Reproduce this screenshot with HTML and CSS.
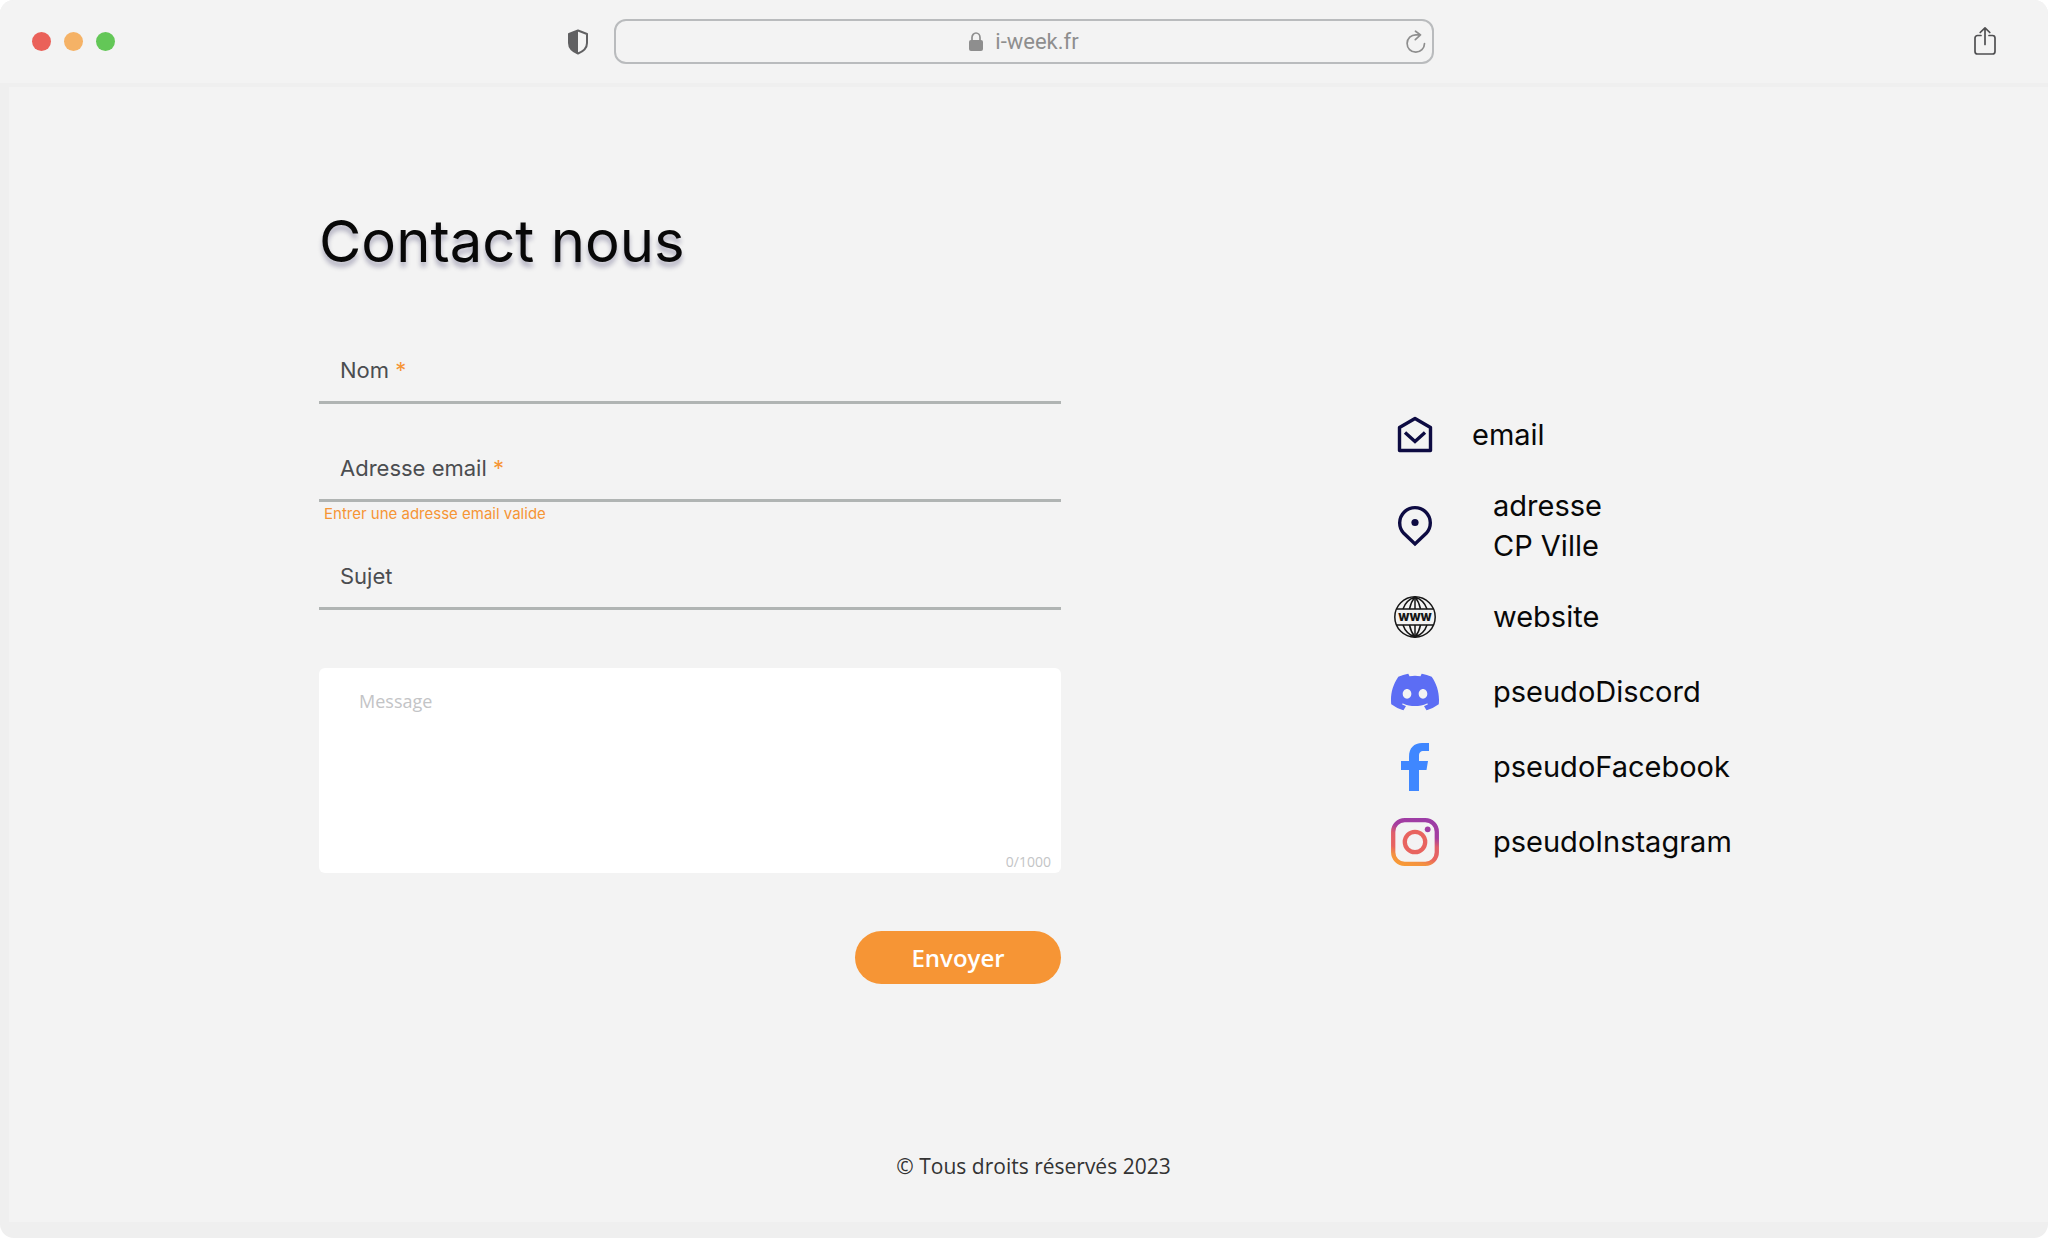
FILE: index.html
```
<!DOCTYPE html>
<html lang="fr">
<head>
    <meta charset="UTF-8">
    <meta name="viewport" content="width=device-width, initial-scale=1.0">
    <title>Contact nous</title>
    <link rel="stylesheet" href="styles.css">
</head>
<body>
    <div class="window">
        <header class="toolbar">
            <div class="toolbar-left">
                <div class="dots">
                    <span class="dot red"></span>
                    <span class="dot orange"></span>
                    <span class="dot green"></span>
                </div>
                <svg width="22" height="26" viewBox="0 0 22 26">
                    <path d="M11 1.500 20 5v9c0 5-4 8.500-9 10.500C6 22.500 2 19 2 14V5z" fill="none" stroke="#606062" stroke-width="2" stroke-linejoin="round"/>
                    <path d="M11 1.500V24.500C6 22.500 2 19 2 14V5z" fill="#606062"/>
                </svg>
            </div>
            <div class="address-bar">
                <svg width="14" height="20" viewBox="0 0 14 20">
                    <rect x="0" y="8" width="14" height="11" rx="2" fill="#8e8e8e"/>
                    <path d="M3 9V5.500a4 4.500 0 0 1 8 0V9" fill="none" stroke="#8e8e8e" stroke-width="1.700"/>
                </svg>
                <span class="url">i-week.fr</span>
                <button class="icon-button reload" type="button" aria-label="Recharger">
                    <svg width="20" height="24" viewBox="0 0 20 24">
                        <path d="M18.500 13.500a8.700 8.700 0 1 1-8.500-8.700h4.500M9.500 1.200l5 3.700-5.200 4.800" fill="none" stroke="#8e8e8e" stroke-width="1.700" stroke-linecap="round" stroke-linejoin="round"/>
                    </svg>
                </button>
            </div>
            <div class="toolbar-right">
                <button class="icon-button" type="button" aria-label="Partager">
                    <svg width="24" height="32" viewBox="0 0 24 32">
                        <path d="M8 9.500H4.500A2.500 2.500 0 0 0 2 12v13.500A2.500 2.500 0 0 0 4.500 28h15a2.500 2.500 0 0 0 2.500-2.500V12a2.500 2.500 0 0 0-2.500-2.500H16M12 18.500V2M7.200 6.500 12 1.800l4.800 4.700" fill="none" stroke="#4f4f51" stroke-width="1.700" stroke-linecap="round" stroke-linejoin="round"/>
                    </svg>
                </button>
            </div>
        </header>

        <div class="page">
            <main class="contact">
                <form class="contact-form">
                    <h1>Contact nous</h1>

                    <div class="field">
                        <label for="nom">Nom <span class="required">*</span></label>
                        <input type="text" id="nom">
                    </div>

                    <div class="field field-email">
                        <label for="email">Adresse email <span class="required">*</span></label>
                        <input type="email" id="email">
                    </div>
                    <p class="error">Entrer une adresse email valide</p>

                    <div class="field">
                        <label for="sujet">Sujet</label>
                        <input type="text" id="sujet">
                    </div>

                    <div class="message">
                        <textarea id="message" placeholder="Message" aria-label="Message" maxlength="1000"></textarea>
                        <span class="counter">0/1000</span>
                    </div>

                    <button class="send" type="submit">Envoyer</button>
                </form>

                <ul class="links">
                    <li class="link-email">
                        <svg width="48" height="48" viewBox="0 0 48 48">
                            <path d="M8.500 16.500 24 7.500l15.500 9V39.500h-31z" fill="none" stroke="#0d0b42" stroke-width="3.400" stroke-linejoin="round"/>
                            <path d="m14 21.500 10 9 10-9" fill="none" stroke="#0d0b42" stroke-width="3.400"/>
                        </svg>
                        <span>email</span>
                    </li>
                    <li class="link-address">
                        <svg width="48" height="48" viewBox="0 0 48 48">
                            <path d="M12.800 31.300a15.300 15.300 0 1 1 22.400 0L24 42z" fill="none" stroke="#0d0b42" stroke-width="3.400"/>
                            <circle cx="24" cy="20.500" r="3.600" fill="#0d0b42"/>
                        </svg>
                        <span>adresse<br>CP Ville</span>
                    </li>
                    <li>
                        <svg width="48" height="48" viewBox="0 0 48 48" fill="none" stroke="#161616" stroke-width="1.500">
                            <circle cx="24" cy="24" r="20.200"/>
                            <path d="M5.500 16h37M5.500 32h37M24 4v12M24 32v12"/>
                            <path d="M12 16c2-6 6-10 12-12 6 2 10 6 12 12M12 32c2 6 6 10 12 12 6-2 10-6 12-12M18.500 16c1-5 3-9 5.500-12 2.500 3 4.500 7 5.500 12M18.500 32c1 5 3 9 5.500 12 2.500-3 4.500-7 5.500-12"/>
                            <text class="www" x="24" y="28" text-anchor="middle">www</text>
                        </svg>
                        <a href="#">website</a>
                    </li>
                    <li>
                        <svg width="48" height="48" viewBox="0 0 24 24">
                            <path fill="#5c6df4" d="M20.317 4.370a19.791 19.791 0 0 0-4.885-1.515.074.074 0 0 0-.079.037c-.210.375-.444.864-.608 1.250a18.270 18.270 0 0 0-5.487 0 12.640 12.640 0 0 0-.617-1.250.077.077 0 0 0-.079-.037A19.736 19.736 0 0 0 3.677 4.370a.070.070 0 0 0-.032.027C.533 9.046-.320 13.580.099 18.058a.082.082 0 0 0 .031.057 19.900 19.900 0 0 0 5.993 3.030.078.078 0 0 0 .084-.028c.462-.630.874-1.295 1.226-1.994a.076.076 0 0 0-.041-.106 13.107 13.107 0 0 1-1.872-.892.077.077 0 0 1-.008-.128c.126-.094.252-.192.372-.292a.074.074 0 0 1 .078-.010c3.928 1.793 8.180 1.793 12.062 0a.074.074 0 0 1 .078.010c.120.098.246.198.373.292a.077.077 0 0 1-.007.127 12.299 12.299 0 0 1-1.873.892.077.077 0 0 0-.041.107c.360.698.772 1.362 1.225 1.993a.076.076 0 0 0 .084.028 19.839 19.839 0 0 0 6.002-3.030.077.077 0 0 0 .032-.054c.500-5.177-.838-9.674-3.549-13.660a.061.061 0 0 0-.031-.030zM8.020 15.330c-1.183 0-2.157-1.085-2.157-2.419 0-1.333.956-2.419 2.157-2.419 1.210 0 2.176 1.096 2.157 2.420 0 1.333-.956 2.418-2.157 2.418zm7.975 0c-1.183 0-2.157-1.085-2.157-2.419 0-1.333.955-2.419 2.157-2.419 1.210 0 2.176 1.096 2.157 2.420 0 1.333-.946 2.418-2.157 2.418z"/>
                        </svg>
                        <a href="#">pseudoDiscord</a>
                    </li>
                    <li>
                        <svg width="48" height="48" viewBox="0 0 48 48">
                            <path fill="#3f87ff" d="M18 48V27h-8v-9h8v-4C18 5 23 0 31 0h7v8h-5c-4 0-5 2-5 5v5h9l-1.500 9H28v21z"/>
                        </svg>
                        <a href="#">pseudoFacebook</a>
                    </li>
                    <li>
                        <svg width="48" height="48" viewBox="0 0 48 48">
                            <defs>
                                <linearGradient id="insta" gradientUnits="userSpaceOnUse" x1="14" y1="48" x2="30" y2="0">
                                    <stop offset="0" stop-color="#f89a35"/>
                                    <stop offset="0.150" stop-color="#f39140"/>
                                    <stop offset="0.300" stop-color="#e9645f"/>
                                    <stop offset="0.550" stop-color="#e05f6a"/>
                                    <stop offset="0.720" stop-color="#a53d9f"/>
                                    <stop offset="1" stop-color="#9c3ca6"/>
                                </linearGradient>
                            </defs>
                            <rect x="2.200" y="2.200" width="43.600" height="43.600" rx="11.500" fill="none" stroke="url(#insta)" stroke-width="4.300"/>
                            <circle cx="24" cy="24" r="10.200" fill="none" stroke="#e8645f" stroke-width="4.300"/>
                            <circle cx="36.700" cy="11.300" r="2.900" fill="#a03da3"/>
                        </svg>
                        <a href="#">pseudoInstagram</a>
                    </li>
                </ul>
            </main>

            <footer>© Tous droits réservés 2023</footer>
        </div>
    </div>
</body>
</html>
```
FILE: styles.css
```
* {
    box-sizing: border-box;
}

body {
    margin: 0;
    background: #fff;
    color: #080808;
    font-family: Inter, sans-serif;
}

button, input, textarea {
    font-family: inherit;
    border: none;
    background: none;
    padding: 0;
}

.window {
    min-height: 100vh;
    display: flex;
    flex-direction: column;
    background: #efefef;
    border-radius: 14px;
    overflow: hidden;
}

/* browser bar */
.toolbar {
    display: grid;
    grid-template-columns: 1fr 40% 1fr;
    align-items: center;
    padding: 19px 0;
    background: #f3f3f3;
    border-bottom: 4px solid #efefef;
}

.toolbar-left {
    display: flex;
    justify-content: space-between;
    align-items: center;
    padding: 0 25px 0 32px;
}

.dots {
    display: flex;
    gap: 13px;
}

.dot {
    width: 19px;
    height: 19px;
    border-radius: 50%;
}

.red {
    background: #ea6159;
}

.orange {
    background: #f5b266;
}

.green {
    background: #63c757;
}

.address-bar {
    position: relative;
    display: flex;
    align-items: center;
    justify-content: center;
    gap: 12px;
    height: 45px;
    border: 2px solid #b9bbbd;
    border-radius: 12px;
}

.url {
    font-family: Roboto, sans-serif;
    font-size: 22px;
    font-weight: 400;
    color: #8e8e8e;
}

.icon-button {
    display: flex;
    cursor: pointer;
}

.reload {
    position: absolute;
    right: 6px;
}

.toolbar-right {
    display: flex;
    justify-content: flex-end;
    padding-right: 51px;
}

/* page */
.page {
    flex: 1;
    display: flex;
    flex-direction: column;
    justify-content: space-between;
    margin: 0 0 16px 9px;
    padding: 112px 310px 40px;
    background: #f3f3f3;
}

.contact {
    display: flex;
    gap: 330px;
}

.contact-form {
    flex: 1;
    display: flex;
    flex-direction: column;
}

h1 {
    margin: 0 0 56px;
    font-size: 58px;
    font-weight: 400;
    line-height: 84px;
    text-shadow: 0 5px 5px rgba(13, 11, 66, 0.3);
}

.field {
    display: flex;
    align-items: center;
    gap: 12px;
    height: 65px;
    margin-bottom: 33px;
    padding: 0 21px;
    border-bottom: 3px solid #b0b4b3;
    font-size: 22px;
    color: #4b4d50;
}

.field input {
    flex: 1;
    font-size: 22px;
}

.field-email {
    margin-bottom: 2px;
}

.required {
    color: #f69535;
}

.error {
    margin: 0 0 21px;
    padding-left: 5px;
    font-size: 15px;
    line-height: 20px;
    color: #f69535;
}

.message {
    position: relative;
    margin: 25px 0 58px;
}

textarea {
    display: block;
    width: 100%;
    height: 205px;
    padding: 21px 40px;
    background: #fff;
    border-radius: 6px;
    font-family: "Open Sans", sans-serif;
    font-size: 18px;
    resize: none;
}

textarea::placeholder {
    color: #c3c4c6;
}

.counter {
    position: absolute;
    right: 10px;
    bottom: 2px;
    font-family: "Open Sans", sans-serif;
    font-size: 14px;
    color: #c3c4c6;
}

.send {
    align-self: flex-end;
    width: 206px;
    height: 53px;
    background: #f69535;
    border-radius: 27px;
    color: #fff;
    font-family: "Open Sans", sans-serif;
    font-size: 24px;
    font-weight: 600;
    cursor: pointer;
}

.links {
    display: flex;
    flex-direction: column;
    gap: 27px;
    width: 347px;
    margin: 212px 0 0;
    padding: 0;
    list-style: none;
    font-size: 29px;
    line-height: 40px;
}

.links li {
    display: flex;
    align-items: center;
    gap: 54px;
    min-height: 48px;
}

.links svg {
    flex: none;
}

.links .link-email {
    gap: 33px;
}

.links a {
    color: inherit;
    text-decoration: none;
}

.www {
    fill: #161616;
    stroke: none;
    font-size: 13px;
    font-weight: 800;
}

footer {
    padding-left: 10px;
    text-align: center;
    font-family: "Open Sans", sans-serif;
    font-size: 21px;
    line-height: 32px;
    color: #333;
}
```
